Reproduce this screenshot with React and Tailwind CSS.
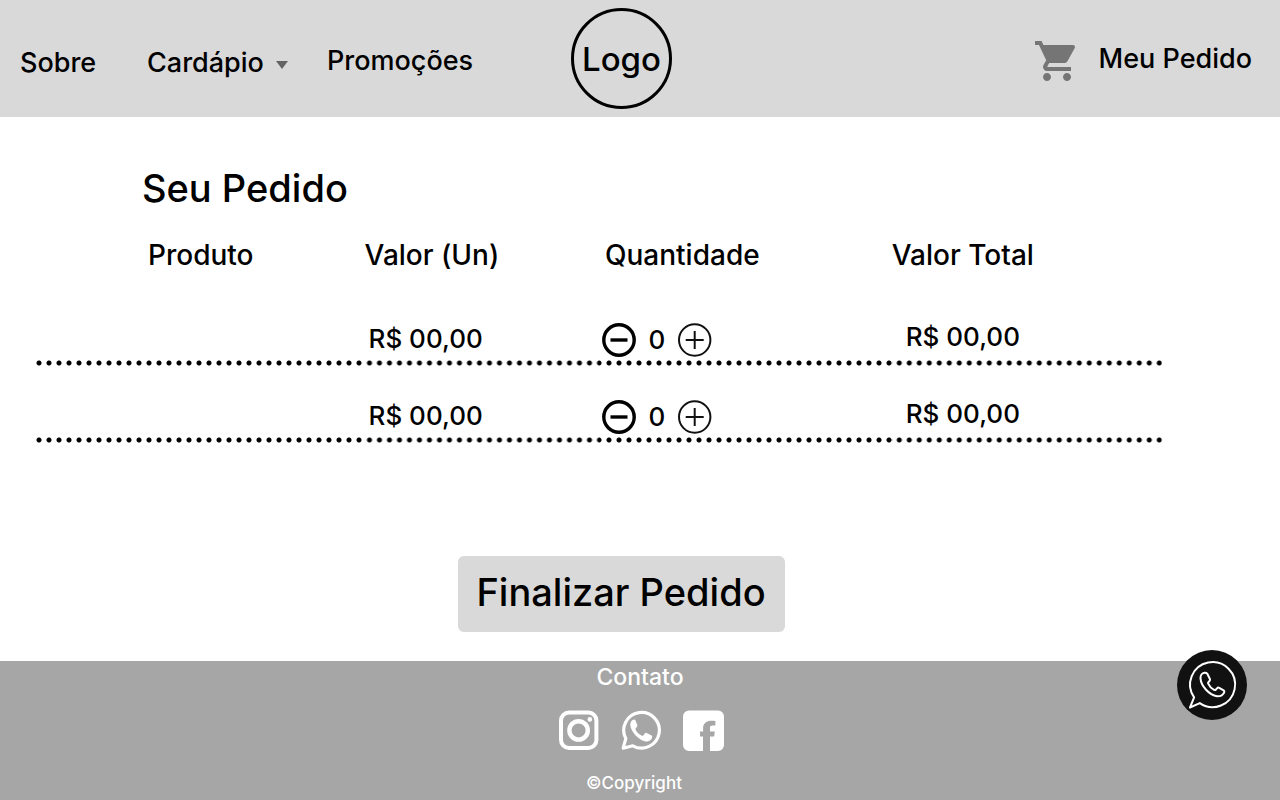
import { useState } from "react";

function CartIcon() {
  return (
    <svg viewBox="1 2 20 20" className="size-10 shrink-0 fill-[#757575]" aria-hidden="true">
      <path d="M7 18c-1.1 0-1.99.9-1.99 2S5.9 22 7 22s2-.9 2-2-.9-2-2-2zM1 2v2h2l3.6 7.59-1.35 2.45c-.16.28-.25.61-.25.96 0 1.1.9 2 2 2h12v-2H7.42c-.14 0-.25-.11-.25-.25l.03-.12.9-1.63h7.45c.75 0 1.41-.41 1.75-1.03l3.58-6.49c.08-.14.12-.31.12-.48 0-.55-.45-1-1-1H5.21l-.94-2H1zm16 16c-1.1 0-1.99.9-1.99 2s.89 2 1.99 2 2-.9 2-2-.9-2-2-2z" />
    </svg>
  );
}

function MinusIcon() {
  return (
    <svg viewBox="0 0 34 34" className="size-[34px]" fill="none" stroke="#000" strokeWidth="3.4" aria-hidden="true">
      <circle cx="17" cy="17" r="15.2" />
      <path d="M8.5 17h17" />
    </svg>
  );
}

function PlusIcon() {
  return (
    <svg viewBox="0 0 34 34" className="size-[34px]" fill="none" stroke="#111" strokeWidth="2" aria-hidden="true">
      <circle cx="16.700" cy="17" r="15.700" />
      <path d="M7.700 17h18M16.700 8v18" />
    </svg>
  );
}

function InstagramIcon() {
  return (
    <svg viewBox="0 0 40 40" className="size-10" fill="none" stroke="#fff" aria-hidden="true">
      <rect x="2" y="2.5" width="35.400" height="35.400" rx="8" strokeWidth="4" />
      <circle cx="19.600" cy="20.400" r="9.2" strokeWidth="4.400" />
      <circle cx="30.800" cy="9.400" r="2.300" fill="#fff" stroke="none" />
    </svg>
  );
}

function WhatsappIcon() {
  return (
    <svg viewBox="0 0 40 40" className="size-10" fill="none" aria-hidden="true">
      <path d="M2.200 38.200 4.800 28.600A17.800 17.800 0 1 1 11.800 35.800Z" stroke="#fff" strokeWidth="3.200" strokeLinejoin="round" />
      <path d="M13.2 9.400c-2.200.2-4 2.600-3.900 5.400.2 6.900 8.900 15.900 15.400 16.600 3.200.3 6.100-1.500 6.400-4.200.1-.8 0-1.300-.5-1.600l-5-2.700c-.7-.3-1.200-.2-1.600.4l-1.700 2.100c-.4.5-.9.6-1.500.3-2.700-1.200-4.800-3.200-6.200-5.900-.3-.6-.2-1 .2-1.500l1.400-1.900c.3-.4.3-.8.1-1.300l-2-5.100c-.2-.4-.5-.6-1.100-.6Z" fill="#fff" />
    </svg>
  );
}

function FacebookIcon() {
  return (
    <svg viewBox="0 0 41 41" className="size-[41px]" fill="#fff" aria-hidden="true">
      <path d="M6 .5h29a6 6 0 0 1 6 6v28.500a6 6 0 0 1-6 6h-8V26.500h4.200l.6-5h-4.800v-3.500c0-1.600.8-2.400 2.500-2.400h2.900v-4.600c-.8-.2-2.400-.3-3.700-.3-5.200 0-8.600 2.600-8.600 7.500v3.300H17v5h3v14.500H6a6 6 0 0 1-6-6V6.500a6 6 0 0 1 6-6Z" />
    </svg>
  );
}

function ChatIcon() {
  return (
    <svg viewBox="0 0 70 70" className="size-[70px]" fill="none" stroke="#fff" strokeWidth="2" strokeLinejoin="round" aria-hidden="true">
      <circle cx="35" cy="35" r="35" fill="#111" stroke="none" />
      <path d="M13 57.500 17.100 47.400A22.500 22.500 0 1 1 22.800 53.100Z" />
      <path d="M27.500 22.700c-2.500.3-4.200 2.700-4 5.700.5 7.500 8.800 16.800 16.500 17.800 3.500.4 6.700-1.500 7.300-4.200.1-.8-.1-1.300-.7-1.700l-4.400-2.500c-.8-.4-1.500-.3-2 .3l-1.400 1.600c-.5.500-1 .5-1.700.2-2.700-1.300-4.700-3.500-5.900-6.200-.3-.7-.2-1.200.3-1.700l1.200-1.300c.4-.5.5-1 .2-1.700l-2.600-5.300c-.6-.9-1.500-1.100-2.800-1Z" />
    </svg>
  );
}

function Header() {
  return (
    <header className="grid h-[117px] grid-cols-[571fr_101px_608fr] items-center bg-[#d9d9d9] text-[27px] leading-8 font-medium">
      <nav className="grid grid-cols-[127px_180px_auto] items-center pl-5">
        <a href="#sobre" className="pt-2">Sobre</a>
        <button type="button" aria-haspopup="menu" className="flex items-center gap-3 pt-2">
          Cardápio
          <svg viewBox="0 0 12 8" className="mt-1 h-2 w-3 fill-[#636363]" aria-hidden="true">
            <path d="M0 0h12L6 8Z" />
          </svg>
        </button>
        <a href="#promocoes" className="justify-self-start pt-1">Promoções</a>
      </nav>
      <a href="#inicio" className="flex size-[101px] items-center justify-center rounded-full border-3 border-black text-[33px]">
        Logo
      </a>
      <a href="#pedido" className="flex items-center gap-6 justify-self-end pt-1 pr-7">
        <CartIcon />
        <span className="pb-1">Meu Pedido</span>
      </a>
    </header>
  );
}

function OrderRow() {
  const [quantity, setQuantity] = useState(0);
  return (
    <tr className="h-[77px] bg-[radial-gradient(circle_at_3px_3px,#000_2px,transparent_3px)] bg-[length:10px_6px] bg-bottom-left bg-repeat-x">
      <td />
      <td className="pt-[22px] pl-1.5">R$ 00,00</td>
      <td className="pt-6 pl-[3px]">
        <div className="flex items-center">
          <button type="button" aria-label="Diminuir quantidade" onClick={() => setQuantity(Math.max(0, quantity - 1))}>
            <MinusIcon />
          </button>
          <output className="w-[42px] text-center">{quantity}</output>
          <button type="button" aria-label="Aumentar quantidade" onClick={() => setQuantity(quantity + 1)}>
            <PlusIcon />
          </button>
        </div>
      </td>
      <td className="pt-[18px] pl-3.5">R$ 00,00</td>
    </tr>
  );
}

export default function App() {
  return (
    <div className="flex min-h-screen flex-col bg-white font-['Inter','Liberation_Sans',sans-serif] text-black">
      <Header />
      <main className="flex grow flex-col pr-[118px] pb-[29px] pl-9 font-medium">
        <h1 className="pt-12 pl-[106px] text-[38px] leading-[46px] font-medium">Seu Pedido</h1>
        <table className="mt-6 w-full table-fixed text-left text-[26px] leading-8">
          <colgroup>
            <col className="w-[29%]" />
            <col className="w-[21%]" />
            <col className="w-[26%]" />
            <col className="w-[24%]" />
          </colgroup>
          <thead>
            <tr className="h-[54px] align-top text-[28px]">
              <th scope="col" className="pt-1 pl-28 font-medium">Produto</th>
              <th scope="col" className="pt-1 pl-0.5 font-medium">Valor (Un)</th>
              <th scope="col" className="pt-1 pl-1.5 font-medium">Quantidade</th>
              <th scope="col" className="pt-1 font-medium">Valor Total</th>
            </tr>
          </thead>
          <tbody>
            <OrderRow />
            <OrderRow />
          </tbody>
        </table>
        <div className="mt-auto flex justify-center pl-11">
          <button type="button" className="h-19 w-[327px] rounded-md bg-[#d9d9d9] pb-1 text-[38px] whitespace-nowrap">
            Finalizar Pedido
          </button>
        </div>
      </main>
      <footer className="flex h-[139px] flex-col items-center bg-[#a6a6a6] text-white">
        <h2 className="text-[23px] leading-8 font-medium">Contato</h2>
        <div className="mt-[17px] flex gap-[22px] pl-0.5">
          <a href="#instagram" aria-label="Instagram"><InstagramIcon /></a>
          <a href="#whatsapp" aria-label="WhatsApp"><WhatsappIcon /></a>
          <a href="#facebook" aria-label="Facebook"><FacebookIcon /></a>
        </div>
        <p className="mt-5 pr-3 text-[17px] leading-6 font-medium">©Copyright</p>
      </footer>
      <a href="#conversa" aria-label="Conversar no WhatsApp" className="fixed right-[33px] bottom-20">
        <ChatIcon />
      </a>
    </div>
  );
}
